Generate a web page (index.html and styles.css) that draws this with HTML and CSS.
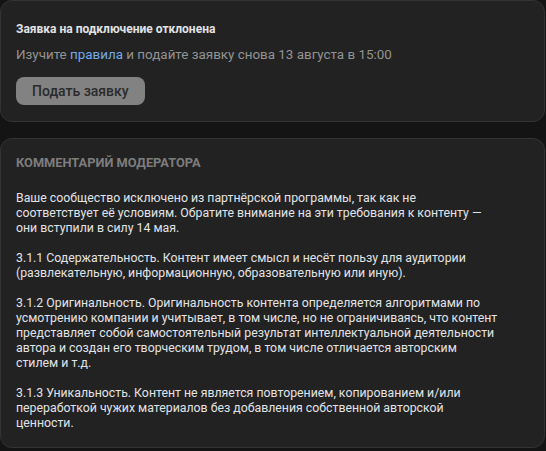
FILE: index.html
```html
<!DOCTYPE html>
<html lang="ru">
<head>
    <meta charset="UTF-8">
    <meta name="viewport" content="width=device-width, initial-scale=1.0">
    <title>Заявка отклонена</title>
    <link rel="stylesheet" href="styles.css">
</head>
<body>
    <div class="page">
        <div class="card status-card">
            <div class="status-title">Заявка на подключение отклонена</div>
            <div class="status-text">
                Изучите <a href="#" class="link">правила</a> и подайте заявку снова 13 августа в 15:00
            </div>
            <button type="button" class="apply-button" disabled>Подать заявку</button>
        </div>

        <div class="card comment-card">
            <div class="comment-header">Комментарий модератора</div>
            <div class="comment-body">
                <p>Ваше сообщество исключено из партнёрской программы, так как не<br>
                соответствует её условиям. Обратите внимание на эти требования к контенту —<br>
                они вступили в силу 14 мая.</p>
                <p>3.1.1 Содержательность. Контент имеет смысл и несёт пользу для аудитории<br>
                (развлекательную, информационную, образовательную или иную).</p>
                <p>3.1.2 Оригинальность. Оригинальность контента определяется алгоритмами по<br>
                усмотрению компании и учитывает, в том числе, но не ограничиваясь, что контент<br>
                представляет собой самостоятельный результат интеллектуальной деятельности<br>
                автора и создан его творческим трудом, в том числе отличается авторским<br>
                стилем и т.д.</p>
                <p>3.1.3 Уникальность. Контент не является повторением, копированием и/или<br>
                переработкой чужих материалов без добавления собственной авторской<br>
                ценности.</p>
            </div>
        </div>
    </div>
</body>
</html>
```

FILE: styles.css
```css
body {
    margin: 0;
    padding: 0;
    background-color: #141414;
    font-family: Roboto, "Liberation Sans", sans-serif;
    color: #e1e3e6;
}
.page {
    display: flex;
    flex-direction: column;
    gap: 16px;
    width: 545px;
}
.card {
    background: #222222;
    border: 1px solid #333333;
    border-radius: 12px;
}
.status-card {
    padding: 19px 15px 16px;
    display: flex;
    flex-direction: column;
    align-items: flex-start;
}
.status-title {
    font-size: 12px;
    font-weight: 700;
    line-height: 18px;
}
.status-text {
    margin-top: 8px;
    font-size: 13.4px;
    line-height: 18px;
    color: #939393;
}
.link {
    color: #71aaeb;
    text-decoration: none;
}
.apply-button {
    margin-top: 13px;
    height: 28px;
    padding: 0 16px;
    border: none;
    border-radius: 8px;
    background-color: #828282;
    color: #2b2b2b;
    font-family: inherit;
    font-size: 14px;
    font-weight: 500;
}
.comment-card {
    padding: 16px 15px 16px;
}
.comment-header {
    font-size: 12.8px;
    font-weight: 700;
    line-height: 16px;
    text-transform: uppercase;
    color: #7d7d7d;
}
.comment-body {
    margin-top: 20px;
    font-size: 12.3px;
    line-height: 15px;
}
.comment-body p {
    margin: 0 0 15px;
    white-space: nowrap;
}
.comment-body p:last-child {
    margin-bottom: 0;
}
```
